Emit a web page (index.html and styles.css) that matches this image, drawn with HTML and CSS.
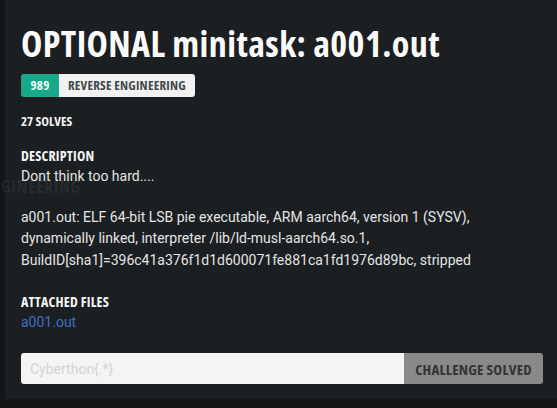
FILE: index.html
```html
<!DOCTYPE html>
<html>
<head>
<meta charset="utf-8">
<link rel="stylesheet" href="styles.css">
</head>
<body>
<div class="page">
  <div class="modal">
    <h1 class="title">OPTIONAL minitask: a001.out</h1>
    <div class="badge"><span class="badge-pts">989</span><span class="badge-cat">REVERSE ENGINEERING</span></div>
    <div class="solves">27 SOLVES</div>
    <div class="section">
      <div class="label">DESCRIPTION</div>
      <p class="text">Dont think too hard....</p>
      <p class="text para">a001.out: ELF 64-bit LSB pie executable, ARM aarch64, version 1 (SYSV), dynamically linked, interpreter /lib/ld-musl-aarch64.so.1, BuildID[sha1]=396c41a376f1d1d600071fe881ca1fd1976d89bc, stripped</p>
    </div>
    <div class="section files">
      <div class="label">ATTACHED FILES</div>
      <a class="file" href="#">a001.out</a>
    </div>
    <form class="flag">
      <input class="flag-input" type="text" placeholder="Cyberthon{.*}">
      <button class="flag-btn" type="button">CHALLENGE SOLVED</button>
    </form>
  </div>
  <div class="ghost">GINEERING</div>
</div>
</body>
</html>
```
FILE: styles.css
```css
html, body {
  margin: 0;
  padding: 0;
  background: #131517;
  width: 557px;
  height: 408px;
  overflow: hidden;
}
.page {
  position: relative;
  height: 408px;
  padding-left: 5px;
  box-sizing: border-box;
}
.ghost {
  position: absolute;
  left: 1px;
  top: 178px;
  z-index: 2;
  pointer-events: none;
  font-family: "Open Sans", sans-serif;
  font-stretch: 75%;
  font-weight: 700;
  font-size: 17px;
  line-height: 17px;
  color: rgba(255, 255, 255, 0.06);
  letter-spacing: 0.8px;
}
.modal {
  position: relative;
  z-index: 1;
  background: #1c1f22;
  height: 399px;
  padding: 24px 14px 0 16px;
  box-sizing: border-box;
  font-family: Roboto, sans-serif;
  color: #e6e6e6;
}
.title {
  margin: 0;
  font-family: "Open Sans", sans-serif;
  font-stretch: 75%;
  font-weight: 700;
  font-size: 36px;
  line-height: 40px;
  letter-spacing: 0.4px;
  color: #fafafa;
}
.badge {
  display: inline-flex;
  margin-top: 10px;
  height: 23px;
  border-radius: 3px;
  overflow: hidden;
  font-family: "Open Sans", sans-serif;
  font-stretch: 75%;
  font-weight: 700;
  font-size: 13px;
  line-height: 23px;
  letter-spacing: 0.2px;
}
.badge-pts {
  background: #18a88b;
  color: #e8fff8;
  width: 38px;
  text-align: center;
}
.badge-cat {
  background: #f1f1f1;
  color: #454a4e;
  padding: 0 9px;
}
.solves {
  margin-top: 16px;
  font-family: "Open Sans", sans-serif;
  font-stretch: 75%;
  font-weight: 700;
  font-size: 13px;
  line-height: 16px;
  color: #f2f2f2;
}
.section {
  margin-top: 19px;
}
.label {
  font-family: "Open Sans", sans-serif;
  font-stretch: 75%;
  font-weight: 700;
  font-size: 14px;
  line-height: 16px;
  letter-spacing: 0.2px;
  color: #f5f5f5;
}
.text {
  margin: 2px 0 0;
  font-size: 14px;
  line-height: 21.5px;
  color: #e4e4e4;
}
.text.para {
  margin-top: 19px;
}
.files {
  margin-top: 23px;
}
.file {
  display: block;
  margin-top: 2px;
  font-size: 14px;
  line-height: 21px;
  color: #3b6fc6;
  text-decoration: none;
}
.flag {
  display: flex;
  margin: 20px 0 0;
  height: 31px;
  border-radius: 3px;
  overflow: hidden;
}
.flag-input {
  flex: 1;
  border: none;
  margin: 0;
  padding: 0 9px;
  background: #f4f4f4;
  font-family: Roboto, sans-serif;
  font-size: 14px;
  outline: none;
}
.flag-input::placeholder {
  color: #d3d3d3;
}
.flag-btn {
  width: 139px;
  border: none;
  margin: 0;
  background: #8b8888;
  color: #333537;
  font-family: "Open Sans", sans-serif;
  font-stretch: 75%;
  font-weight: 700;
  font-size: 15px;
  letter-spacing: 0.2px;
  padding: 0;
}
```
